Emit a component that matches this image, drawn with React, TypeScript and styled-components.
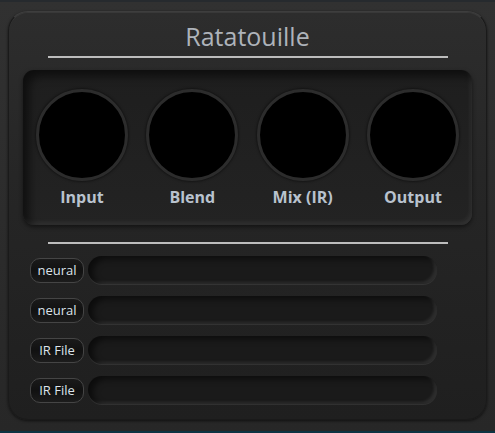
import React from "react";
import styled, { createGlobalStyle } from "styled-components";

const Global = createGlobalStyle`
  html, body { margin: 0; padding: 0; background: #2c2c2c; }
  body { font-family: "Open Sans", "Noto Sans", sans-serif; }
  * { box-sizing: border-box; }
`;

const Page = styled.div`
  width: 495px;
  height: 433px;
  overflow: hidden;
  background: linear-gradient(#313131, #272727);
  border-top: 2px solid #262a2e;
  border-bottom: 2px solid #0c3443;
  padding: 9px 0 0 8px;
`;

const Panel = styled.div`
  width: 479px;
  height: 409px;
  border-radius: 20px;
  background: linear-gradient(#2d2d2d 0%, #262626 40%, #1f1f1f 100%);
  border: 1px solid #1a1a1a;
  border-top-color: #3e3e3e;
  box-shadow: inset 0 1px 0 rgba(255, 255, 255, 0.06), 0 1px 3px rgba(0, 0, 0, 0.6);
  display: flex;
  flex-direction: column;
  align-items: center;
  padding-top: 8px;
`;

const Title = styled.div`
  font-size: 25px;
  line-height: 32px;
  color: #aeb3ba;
  text-align: center;
  width: 100%;
`;

const Rule = styled.div<{ $top: number }>`
  width: 400px;
  height: 2px;
  background: #bdbdbd;
  margin-top: ${(p) => p.$top}px;
  flex: none;
`;

const KnobBox = styled.div`
  margin-top: 12px;
  width: 449px;
  height: 155px;
  border-radius: 11px;
  background: linear-gradient(#1e1e1e, #232323);
  box-shadow: inset 6px 6px 10px rgba(0, 0, 0, 0.55),
    inset -2px -3px 4px rgba(255, 255, 255, 0.07), 0 2px 4px rgba(0, 0, 0, 0.5);
  display: flex;
  justify-content: space-between;
  padding: 19px 13px 0 13px;
`;

const KnobCol = styled.div`
  display: flex;
  flex-direction: column;
  align-items: center;
  width: 92px;
`;

const Knob = styled.div`
  width: 92px;
  height: 92px;
  border-radius: 50%;
  background: #000;
  border: 3px solid #2c2c2c;
  box-shadow: 0 0 3px rgba(0, 0, 0, 0.8), inset 0 0 2px rgba(0, 0, 0, 0.9);
`;

const KnobLabel = styled.div`
  margin-top: 5px;
  font-size: 16px;
  font-weight: 700;
  line-height: 22px;
  color: #b9c2ce;
  white-space: nowrap;
`;

const Rows = styled.div`
  margin-top: 12px;
  width: 100%;
  padding-left: 21px;
  display: flex;
  flex-direction: column;
  gap: 12px;
`;

const Row = styled.div`
  display: flex;
  align-items: center;
  gap: 4px;
  height: 28px;
`;

const FileButton = styled.div`
  width: 54px;
  height: 25px;
  border-radius: 10px;
  border: 1px solid #454545;
  background: linear-gradient(#1a1a1a, #111 50%, #1c1c1c);
  color: #dde3ea;
  font-size: 13px;
  line-height: 23px;
  text-align: center;
  white-space: nowrap;
`;

const Bar = styled.div`
  width: 349px;
  height: 28px;
  border-radius: 14px;
  background: #1a1a1a;
  box-shadow: inset 5px 3px 6px rgba(0, 0, 0, 0.55),
    inset -3px -2px 3px rgba(255, 255, 255, 0.09), 0 1px 0 rgba(255, 255, 255, 0.08);
`;

const knobs = ["Input", "Blend", "Mix (IR)", "Output"];
const rows = ["neural", "neural", "IR File", "IR File"];

export default function App() {
  return (
    <>
      <Global />
      <Page>
        <Panel>
          <Title>Ratatouille</Title>
          <Rule $top={4} />
          <KnobBox>
            {knobs.map((k) => (
              <KnobCol key={k}>
                <Knob />
                <KnobLabel>{k}</KnobLabel>
              </KnobCol>
            ))}
          </KnobBox>
          <Rule $top={17} />
          <Rows>
            {rows.map((r, i) => (
              <Row key={i}>
                <FileButton>{r}</FileButton>
                <Bar />
              </Row>
            ))}
          </Rows>
        </Panel>
      </Page>
    </>
  );
}
